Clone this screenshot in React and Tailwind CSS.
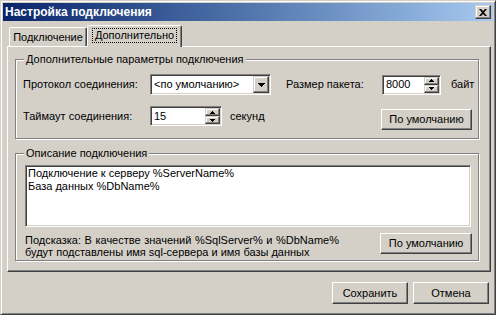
import React from "react";

const raised =
  "border border-t-white border-l-white border-r-[#404040] border-b-[#404040] shadow-[inset_-1px_-1px_0_#808080,inset_1px_1px_0_#d4d0c8] bg-[#d4d0c8]";
const raisedSmall =
  "border border-t-[#d4d0c8] border-l-[#d4d0c8] border-r-[#404040] border-b-[#404040] shadow-[inset_-1px_-1px_0_#808080,inset_1px_1px_0_white] bg-[#d4d0c8]";
const sunken =
  "border border-t-[#808080] border-l-[#808080] border-r-white border-b-white shadow-[inset_1px_1px_0_#404040,inset_-1px_-1px_0_#d4d0c8] bg-white";
const group =
  "relative border border-[#808080] shadow-[1px_1px_0_white,inset_1px_1px_0_white]";

function Spinner({ value, w }) {
  return (
    <div className={`${sunken} ${w} h-[20px] flex p-[1px]`}>
      <div className="flex-1 pl-[2px] flex items-center leading-none">{value}</div>
      <div className="w-[15px] flex flex-col">
        <div className={`${raisedSmall} flex-1 flex items-center justify-center`}>
          <svg width="5" height="3" viewBox="0 0 5 3">
            <path d="M2 0h1v1h1v1h1v1H0V2h1V1h1z" fill="black" />
          </svg>
        </div>
        <div className={`${raisedSmall} flex-1 flex items-center justify-center`}>
          <svg width="5" height="3" viewBox="0 0 5 3">
            <path d="M0 0h5v1H4v1H3v1H2V2H1V1H0z" fill="black" />
          </svg>
        </div>
      </div>
    </div>
  );
}

export default function App() {
  return (
    <div className="w-[496px] h-[315px] bg-[#d4d0c8] border border-t-[#d4d0c8] border-l-[#d4d0c8] border-r-[#404040] border-b-[#404040] shadow-[inset_1px_1px_0_white,inset_-1px_-1px_0_#808080] p-[2px] flex flex-col text-[11px] text-black font-['Liberation_Sans',Arial,sans-serif]">
      {/* Title bar */}
      <div className="h-[18px] flex items-center justify-between pl-[2px] pr-[2px] bg-linear-to-r from-[#0a246a] to-[#a6caf0]">
        <span className="text-white font-bold text-[12px] leading-none">Настройка подключения</span>
        <div className={`${raisedSmall} w-[16px] h-[14px] flex items-center justify-center`}>
          <svg width="8" height="7" viewBox="0 0 8 7">
            <path d="M0 0h2l2 2 2-2h2L5 3.5 8 7H6L4 5 2 7H0l3-3.5z" fill="black" />
          </svg>
        </div>
      </div>

      {/* Tabs + panel */}
      <div className="mt-[4px] ml-[4px] mr-[2px] flex flex-col">
        <div className="h-[21px] flex items-end pl-[2px]">
          <div className="w-[78px] h-[19px] border-t border-l border-r border-t-white border-l-white border-r-[#404040] shadow-[inset_-1px_0_0_#808080] rounded-t-[2px] flex items-center justify-center pt-[1px]">
            Подключение
          </div>
          <div className="relative z-10 -mb-[1px] w-[95px] h-[22px] bg-[#d4d0c8] border-t border-l border-r border-t-white border-l-white border-r-[#404040] shadow-[inset_-1px_0_0_#808080] rounded-t-[2px] flex items-start justify-center pt-[2px]">
            <span className="border border-dotted border-black px-[2px] h-[15px] flex items-center">Дополнительно</span>
          </div>
        </div>
        <div className="h-[226px] border border-t-white border-l-white border-r-[#404040] border-b-[#404040] shadow-[inset_-1px_-1px_0_#808080] flex flex-col">
          {/* Group 1 */}
          <div className={`${group} ml-[7px] mt-[12px] w-[464px] h-[80px]`}>
            <span className="absolute -top-[8px] left-[8px] px-[2px] bg-[#d4d0c8] leading-[14px]">
              Дополнительные параметры подключения
            </span>
            <div className="mt-[14px] pl-[7px] h-[21px] flex items-center">
              <div className="w-[127px]">Протокол соединения:</div>
              <div className={`${sunken} w-[121px] h-[21px] flex p-[1px]`}>
                <div className="flex-1 pl-[2px] flex items-center">&lt;по умолчанию&gt;</div>
                <div className={`${raisedSmall} w-[16px] flex items-center justify-center`}>
                  <svg width="7" height="4" viewBox="0 0 7 4">
                    <path d="M0 0h7v1H6v1H5v1H4v1H3V3H2V2H1V1H0z" fill="black" />
                  </svg>
                </div>
              </div>
              <div className="ml-[15px] w-[96px]">Размер пакета:</div>
              <Spinner value="8000" w="w-[59px]" />
              <div className="ml-[10px]">байт</div>
            </div>
            <div className="mt-[11px] pl-[7px] flex items-start">
              <div className="w-[127px] h-[20px] flex items-center">Таймаут соединения:</div>
              <Spinner value="15" w="w-[72px]" />
              <div className="ml-[8px] h-[20px] flex items-center">секунд</div>
              <button className={`${raised} ml-auto mr-[6px] mt-[3px] w-[91px] h-[21px] flex items-center justify-center`}>
                По умолчанию
              </button>
            </div>
          </div>

          {/* Group 2 */}
          <div className={`${group} ml-[7px] mt-[14px] w-[464px] h-[108px]`}>
            <span className="absolute -top-[8px] left-[8px] px-[2px] bg-[#d4d0c8] leading-[14px]">
              Описание подключения
            </span>
            <div className={`${sunken} ml-[9px] mt-[11px] w-[446px] h-[62px] pl-[2px] pt-[1px] leading-[13px]`}>
              <div>Подключение к серверу %ServerName%</div>
              <div>База данных %DbName%</div>
            </div>
            <div className="mt-[6px] flex items-start">
              <div className="ml-[9px] leading-[12px] pt-[1px]">
                <div className="w-[314px] text-justify [text-align-last:justify]">
                  Подсказка: В качестве значений %SqlServer% и %DbName%
                </div>
                <div>будут подставлены имя sql-сервера и имя базы данных</div>
              </div>
              <button className={`${raised} ml-auto mr-[6px] w-[92px] h-[21px] flex items-center justify-center`}>
                По умолчанию
              </button>
            </div>
          </div>
        </div>
      </div>

      {/* Bottom buttons */}
      <div className="mt-[10px] flex justify-end gap-[5px] pr-[4px]">
        <button className={`${raised} w-[76px] h-[22px] flex items-center justify-center`}>Сохранить</button>
        <button className={`${raised} w-[76px] h-[22px] flex items-center justify-center`}>Отмена</button>
      </div>
    </div>
  );
}
